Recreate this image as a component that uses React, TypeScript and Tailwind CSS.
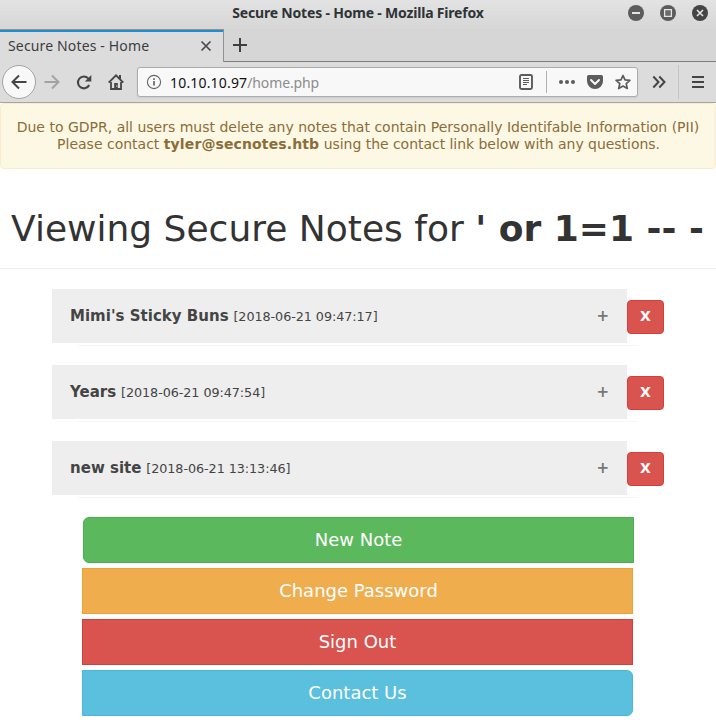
import type { ReactNode } from "react";

const notes = [
  { title: "Mimi's Sticky Buns", date: "2018-06-21 09:47:17" },
  { title: "Years", date: "2018-06-21 09:47:54" },
  { title: "new site", date: "2018-06-21 13:13:46" },
];

const actions = [
  { label: "New Note", style: "ml-px rounded-l-md border-[#4cae4c] bg-[#5cb85c]" },
  { label: "Change Password", style: "border-[#eea236] bg-[#f0ad4e] pl-[2px]" },
  { label: "Sign Out", style: "border-[#d43f3a] bg-[#d9534f]" },
  { label: "Contact Us", style: "rounded-r-md border-[#46b8da] bg-[#5bc0de]" },
];

function Icon({ children, className = "", size = 16 }: { children: ReactNode; className?: string; size?: number }) {
  return (
    <svg
      width={size}
      height={size}
      viewBox={`0 0 ${size} ${size}`}
      fill="none"
      stroke="currentColor"
      strokeWidth="2"
      className={`shrink-0 ${className}`}
    >
      {children}
    </svg>
  );
}

function TitleBar() {
  return (
    <div className="relative flex h-[29px] items-center justify-end gap-4 bg-linear-to-b from-[#e3e3e3] to-[#d6d6d6] pr-2 pb-[3px]">
      <div className="absolute inset-x-0 top-0 flex h-[25px] items-center justify-center text-[14px] font-bold text-[#2e3436]">
        <span className="whitespace-nowrap tracking-[-0.19px]">Secure Notes - Home - Mozilla Firefox</span>
      </div>
      <Icon className="text-[#e4e4e4]">
        <circle cx="8" cy="8" r="8" fill="#5c5c5c" stroke="none" />
        <path d="M4 8h8" />
      </Icon>
      <Icon className="text-[#e4e4e4]">
        <circle cx="8" cy="8" r="8" fill="#5c5c5c" stroke="none" />
        <path d="M4.6 4.6h6.8v6.8H4.6z" fill="#6a6a6a" strokeWidth="1.3" />
      </Icon>
      <Icon className="text-[#e4e4e4]">
        <circle cx="8" cy="8" r="8" fill="#454545" stroke="none" />
        <path d="M5 5l6 6M11 5l-6 6" strokeWidth="1.6" />
      </Icon>
    </div>
  );
}

function TabStrip() {
  return (
    <div className="flex h-[33px] bg-[#d6d6d6]">
      <div className="flex w-[224px] items-center justify-between border-t border-r border-[#919191] bg-[#dcdcdc] pr-[9px] pl-2 text-[14px] text-[#3b3e40] shadow-[inset_0_2px_0_#1d8fd1]">
        <span className="pb-[2px] whitespace-nowrap tracking-[0.15px]">Secure Notes - Home</span>
        <Icon className="text-[#4a4a4a]">
          <path d="M3.5 3.5l9 9M12.5 3.5l-9 9" strokeWidth="1.7" />
        </Icon>
      </div>
      <div className="flex flex-1 items-center border-b border-[#7e7e7e] pl-2 text-[#3f3f3f]">
        <Icon>
          <path d="M8 1v14M1 8h14" strokeWidth="2" />
        </Icon>
      </div>
    </div>
  );
}

function Toolbar() {
  return (
    <div className="flex h-[41px] items-center border-b border-[#a5a5a5] bg-[#dcdcdc] pl-[2px] text-[#454545]">
      <div className="flex size-[34px] items-center justify-center rounded-full border border-[#a3a3a3] bg-[#f8f8f8]">
        <Icon>
          <path d="M15.5 8H2M8 1.5L1.5 8L8 14.5" />
        </Icon>
      </div>
      <Icon className="ml-2 text-[#a2a2a2]">
        <path d="M.5 8H14M8 1.5L14.5 8L8 14.5" />
      </Icon>
      <Icon className="ml-4">
        <path d="M12.2 4.4A5.9 5.9 0 1 0 13.2 11" strokeWidth="2.1" />
        <path d="M15.3 1v6.5H8.8z" fill="currentColor" stroke="none" />
      </Icon>
      <Icon className="ml-4">
        <path d="M.7 8.6L8 1.4l7.3 7.2" strokeWidth="1.9" />
        <path d="M3 8v7h10V8" strokeWidth="1.8" />
        <path d="M6.2 15V9h3.6v6z" fill="currentColor" stroke="none" />
        <path d="M11 1h2v4h-2z" fill="currentColor" stroke="none" />
        <path d="M8.2 11.5h1v1.2h-1z" fill="#dcdcdc" stroke="none" />
      </Icon>
      <div className="ml-[13px] flex h-[30px] w-[501px] items-center rounded-[3px] border border-[#acacac] bg-[#f8f8f8] pl-[8px] shadow-[0_1px_2px_rgba(0,0,0,0.08)]">
        <Icon className="text-[#666]">
          <circle cx="8" cy="8" r="6.6" strokeWidth="1.1" />
          <path d="M8 7v4.5M8 4.2V6" strokeWidth="1.7" />
        </Icon>
        <span className="ml-2 flex-1 text-[14px] whitespace-nowrap text-[#8c8c8c]">
          <span className="tracking-[0.18px] text-[#111]">10.10.10.97</span>
          <span className="tracking-[-0.15px]">/home.php</span>
        </span>
        <Icon className="text-[#5c5c5c]">
          <rect x="2" y="1" width="12" height="14" rx="1.5" strokeWidth="1.9" />
          <path d="M5 4.5h6M5 6.5h6M5 8.5h6M5 10.5h4" strokeWidth="1" />
        </Icon>
        <div className="ml-3 h-[22px] w-px bg-[#b1b1b1]" />
        <Icon className="ml-3 text-[#5c5c5c]">
          <g fill="currentColor" stroke="none">
            <circle cx="2" cy="8" r="2" />
            <circle cx="8" cy="8" r="2" />
            <circle cx="14" cy="8" r="2" />
          </g>
        </Icon>
        <Icon className="ml-3 text-[#5c5c5c]">
          <path d="M1.6 1h12.8Q16 1 16 2.6V7a8 8 0 0 1-16 0V2.6Q0 1 1.6 1z" fill="currentColor" stroke="none" />
          <path d="M4 6l4 4l4-4" stroke="#f8f8f8" strokeLinecap="round" strokeLinejoin="round" />
        </Icon>
        <Icon className="mr-[6px] ml-3 text-[#5c5c5c]">
          <path
            d="M8 1.5l2 4.4l4.9.5l-3.7 3.2l1.1 4.9L8 12l-4.3 2.5l1.1-4.9L1.1 6.4l4.9-.5z"
            strokeWidth="1.7"
            strokeLinejoin="round"
          />
        </Icon>
      </div>
      <Icon className="ml-[13px]">
        <path d="M2.3 2.5L7.5 8l-5.2 5.5M8.3 2.5L13.5 8l-5.2 5.5" />
      </Icon>
      <div className="ml-[11px] h-[34px] w-px bg-[#c3c3c3]" />
      <Icon className="ml-[11px]">
        <path d="M2 3h12M2 8h12M2 13h12" />
      </Icon>
    </div>
  );
}

export default function App() {
  return (
    <div className="h-[720px] w-[716px] overflow-hidden bg-white">
      <header className="font-['Noto_Sans',sans-serif]">
        <TitleBar />
        <TabStrip />
        <Toolbar />
      </header>
      <main className="font-['DejaVu_Sans',sans-serif]">
        <div className="h-[66px] rounded border border-[#faebcc] bg-[#fcf8e3] pt-[15px] text-center text-[14px] leading-[17px] whitespace-nowrap text-[#8a6d3b]">
          <p>Due to GDPR, all users must delete any notes that contain Personally Identifable Information (PII)</p>
          <p className="pl-px">
            Please contact <b className="tracking-[0.12px]">tyler@secnotes.htb</b>{" "}
            <span className="tracking-[-0.04px]">using the contact link below with any questions.</span>
          </p>
        </div>
        <h1 className="mt-[40px] h-[60px] border-b border-[#eee] pr-px text-center text-[36px] leading-[39px] whitespace-nowrap text-[#333]">
          Viewing Secure Notes for <b>' or 1=1 -- -</b>
        </h1>
        <div className="mt-5 flex flex-col gap-[19px] pl-[52px]">
          {notes.map((note) => (
            <div key={note.title}>
              <div className="flex items-center">
                <div className="flex h-[54px] w-[575px] items-center bg-[#eee] px-[18px] text-[#444]">
                  <span className="flex-1 text-[15px]">
                    <b className="tracking-[0.02px]">{note.title}</b>{" "}
                    <span className="text-[12.75px] tracking-[-0.06px]">[{note.date}]</span>
                  </span>
                  <span className="text-[15px] font-bold text-[#777]">+</span>
                </div>
                <button className="mt-[2px] h-[34px] w-[37px] rounded border border-[#d43f3a] bg-[#d9534f] pb-px text-[14px] font-bold text-white">
                  X
                </button>
              </div>
              <div className="mt-[2px] ml-[26px] h-px w-[560px] bg-[#f6f6f6]" />
            </div>
          ))}
        </div>
        <div className="mt-[19px] flex flex-col gap-[5px] pl-[82px]">
          {actions.map((action) => (
            <button
              key={action.label}
              className={`h-[46px] w-[551px] border text-[18px] leading-6 text-white ${action.style}`}
            >
              {action.label}
            </button>
          ))}
        </div>
      </main>
    </div>
  );
}
